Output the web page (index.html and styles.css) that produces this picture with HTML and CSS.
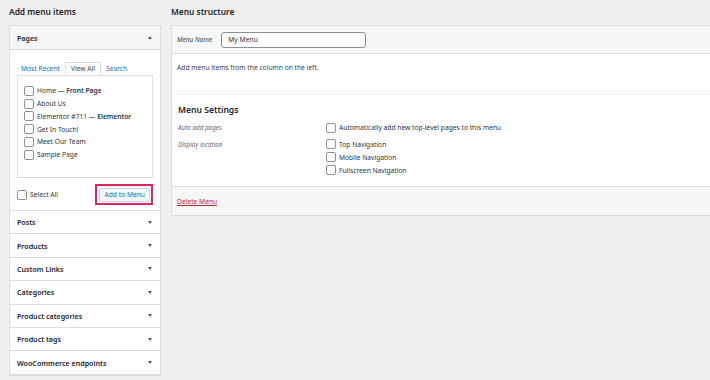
FILE: index.html
```html
<!DOCTYPE html>
<html lang="en">
<head>
    <meta charset="UTF-8">
    <meta name="viewport" content="width=device-width, initial-scale=1.0">
    <title>Menus</title>
    <link rel="stylesheet" href="styles.css">
</head>
<body>
    <div class="wrap">
      <div class="col-left">
        <h2 class="col-title">Add menu items</h2>
        <div class="accordion">
          <div class="section open">
            <div class="section-head">
              <span>Pages</span>
              <span class="arrow up"></span>
            </div>
            <div class="section-body">
              <ul class="tabs">
                <li>Most Recent</li>
                <li class="active">View All</li>
                <li>Search</li>
              </ul>
              <div class="list-box">
                <label class="item"><span class="cb"></span><span>Home — <b>Front Page</b></span></label>
                <label class="item"><span class="cb"></span><span>About Us</span></label>
                <label class="item"><span class="cb"></span><span>Elementor #711 — <b>Elementor</b></span></label>
                <label class="item"><span class="cb"></span><span>Get In Touch!</span></label>
                <label class="item"><span class="cb"></span><span>Meet Our Team</span></label>
                <label class="item"><span class="cb"></span><span>Sample Page</span></label>
              </div>
              <div class="list-foot">
                <label class="item"><span class="cb"></span><span>Select All</span></label>
                <div class="highlight">
                  <button class="btn">Add to Menu</button>
                </div>
              </div>
            </div>
          </div>
          <div class="section"><div class="section-head"><span>Posts</span><span class="arrow"></span></div></div>
          <div class="section"><div class="section-head"><span>Products</span><span class="arrow"></span></div></div>
          <div class="section"><div class="section-head"><span>Custom Links</span><span class="arrow"></span></div></div>
          <div class="section"><div class="section-head"><span>Categories</span><span class="arrow"></span></div></div>
          <div class="section"><div class="section-head"><span>Product categories</span><span class="arrow"></span></div></div>
          <div class="section"><div class="section-head"><span>Product tags</span><span class="arrow"></span></div></div>
          <div class="section"><div class="section-head"><span>WooCommerce endpoints</span><span class="arrow"></span></div></div>
        </div>
      </div>

      <div class="col-right">
        <h2 class="col-title">Menu structure</h2>
        <div class="menu-edit">
          <div class="menu-head">
            <label class="menu-name-label">Menu Name</label>
            <input class="menu-name" type="text" value="My Menu">
          </div>
          <div class="menu-body">
            <p class="hint">Add menu items from the column on the left.</p>
            <div class="settings">
              <h3>Menu Settings</h3>
              <div class="setting-row">
                <div class="setting-label">Auto add pages</div>
                <div class="setting-opts">
                  <label class="item"><span class="cb"></span><span>Automatically add new top-level pages to this menu</span></label>
                </div>
              </div>
              <div class="setting-row">
                <div class="setting-label">Display location</div>
                <div class="setting-opts">
                  <label class="item"><span class="cb"></span><span>Top Navigation</span></label>
                  <label class="item"><span class="cb"></span><span>Mobile Navigation</span></label>
                  <label class="item"><span class="cb"></span><span>Fullscreen Navigation</span></label>
                </div>
              </div>
            </div>
          </div>
          <div class="menu-foot">
            <a href="#" class="delete">Delete Menu</a>
          </div>
        </div>
      </div>
    </div>
</body>
</html>
```

FILE: styles.css
```css
body {
  margin: 0;
  padding: 0;
  background-color: #f0f0f1;
  font-family: "Noto Sans", "Open Sans", sans-serif;
  font-size: 6.7px;
  color: #3c434a;
  overflow: hidden;
}

.wrap {
  display: flex;
  gap: 10px;
  padding: 0 0 0 9px;
}

.col-left {
  width: 152px;
  flex-shrink: 0;
}

.col-right {
  flex: 1;
  margin-right: -4px;
}

.col-title {
  margin: 0;
  height: 25px;
  line-height: 24px;
  font-size: 8.4px;
  font-weight: 600;
  color: #1d2327;
}

/* left accordion */
.accordion {
  background: #fff;
  border: 1px solid #dcdcde;
  border-bottom: 2px solid #dcdcde;
}

.section {
  border-bottom: 1px solid #dcdcde;
}

.section:last-child {
  border-bottom: none;
}

.section-head {
  display: flex;
  justify-content: space-between;
  align-items: center;
  height: 22.4px;
  padding: 0 7px 0 7px;
  font-weight: 600;
  font-size: 7.1px;
  color: #1d2327;
}

.open .section-head {
  height: 23px;
  background: #f6f7f7;
  border-bottom: 1px solid #dcdcde;
}

.arrow {
  width: 0;
  height: 0;
  border-left: 2.5px solid transparent;
  border-right: 2.5px solid transparent;
  border-top: 3px solid #50575e;
  margin-right: 1px;
}

.arrow.up {
  border-top: none;
  border-bottom: 3px solid #50575e;
}

.section-body {
  padding: 12px 7px 0 7px;
  height: 148px;
}

.tabs {
  list-style: none;
  margin: 0 0 0 3px;
  padding: 0;
  display: flex;
  gap: 4px;
  height: 13px;
}

.tabs li {
  padding: 0 1px;
  line-height: 13px;
  color: #2271b1;
}

.tabs .active {
  color: #3c434a;
  background: #fff;
  border: 1px solid #dcdcde;
  border-bottom: 1px solid #fff;
  padding: 0 5px;
  line-height: 12px;
  position: relative;
  z-index: 1;
}

.list-box {
  border: 1px solid #dcdcde;
  padding: 10px 0 0 6px;
  box-sizing: border-box;
  height: 103px;
  display: flex;
  flex-direction: column;
  gap: 3.2px;
}

.item {
  display: flex;
  align-items: center;
  gap: 3px;
  height: 9.6px;
  white-space: nowrap;
  color: #2c3338;
}

.item b {
  font-weight: 600;
}

.cb {
  width: 8px;
  height: 8px;
  border: 1px solid #8c8f94;
  border-radius: 2px;
  background: #fff;
  flex-shrink: 0;
}

.list-foot {
  display: flex;
  justify-content: space-between;
  align-items: center;
  margin-top: 6px;
}

.highlight {
  border: 2px solid #e0245e;
  padding: 2px 1px 1px 2px;
}

.btn {
  font-family: inherit;
  font-size: 6.7px;
  color: #2271b1;
  background: #f6f7f7;
  border: 1px solid #c3d6ea;
  border-radius: 2px;
  height: 14px;
  padding: 0 4px;
  line-height: 12px;
}

/* right panel */
.menu-edit {
  background: #fff;
  border: 1px solid #dcdcde;
  border-right: none;
}

.menu-head {
  display: flex;
  align-items: center;
  gap: 8px;
  height: 27px;
  padding-left: 5px;
  background: #f6f7f7;
  border-bottom: 1px solid #dcdcde;
}

.menu-name-label {
  font-style: italic;
  font-size: 6.5px;
  color: #3c434a;
}

.menu-name {
  width: 145px;
  height: 16px;
  box-sizing: border-box;
  border: 1px solid #8c8f94;
  border-radius: 3px;
  font-family: inherit;
  font-size: 6.8px;
  color: #2c3338;
  padding: 0 6px;
  margin: 0 0 0 1px;
}

.menu-body {
  padding: 0 0 0 5px;
}

.hint {
  margin: 0;
  padding: 10px 0 0;
  height: 30px;
  line-height: 8px;
  border-bottom: 1px solid #f0f0f1;
}

.settings {
  padding: 7px 0 11px 1px;
}

.settings h3 {
  margin: 0 0 5px;
  font-size: 8.6px;
  font-weight: 600;
  color: #1d2327;
  line-height: 16px;
}

.setting-row {
  display: flex;
  margin-bottom: 7px;
}

.setting-row:last-child {
  margin-bottom: 0;
}

.setting-label {
  width: 148px;
  font-style: italic;
  font-size: 6.3px;
  color: #646970;
  line-height: 9px;
}

.setting-opts {
  display: flex;
  flex-direction: column;
  gap: 3.4px;
}

.menu-foot {
  background: #f6f7f7;
  border-top: 1px solid #dcdcde;
  height: 28px;
  display: flex;
  align-items: center;
  padding-left: 5px;
}

.delete {
  color: #b32d2e;
  text-decoration: underline;
  font-size: 6.7px;
}
```
